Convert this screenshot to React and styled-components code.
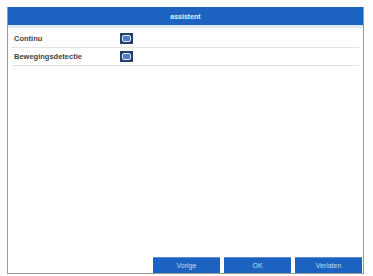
import React from 'react'
import styled, { createGlobalStyle } from 'styled-components'

const GlobalStyle = createGlobalStyle`
	html, body {
		margin: 0;
		padding: 0;
		background: #ffffff;
	}
	body {
		font-family: 'Liberation Sans', Arial, sans-serif;
	}
`

const Page = styled.div`
	width: 373px;
	height: 276px;
	padding: 7px 9px 2px 7px;
	box-sizing: border-box;
	background: #fdfdfd;
`

const Dialog = styled.div`
	height: 100%;
	display: flex;
	flex-direction: column;
	border: 1px solid #9a9a9a;
	border-top: none;
	background: #ffffff;
	box-sizing: border-box;
`

const TitleBar = styled.div`
	height: 18px;
	background: #1c62c0;
	color: #e8eefa;
	font-size: 7px;
	font-weight: bold;
	display: flex;
	align-items: center;
	justify-content: center;
	border-bottom: 3px solid #dde6f3;
`

const Body = styled.div`
	flex: 1;
	display: flex;
	flex-direction: column;
	padding: 2px 4px 0 4px;
`

const Row = styled.div`
	height: 17px;
	display: flex;
	align-items: center;
	border-bottom: 1px solid #e3e3e3;
`

const Label = styled.span`
	width: 106px;
	padding-left: 2px;
	font-size: 7.5px;
	font-weight: bold;
	color: #444444;
`

const Check = styled.span`
	width: 13px;
	height: 11px;
	background: #23406e;
	display: flex;
	align-items: center;
	justify-content: center;
	box-sizing: border-box;
	&::after {
		content: '';
		width: 7px;
		height: 5px;
		border: 1.5px solid #e4e9f2;
		border-radius: 2px;
		background: #4f7cc4;
	}
`

const Footer = styled.div`
	display: flex;
	justify-content: flex-end;
	gap: 4px;
	margin-top: auto;
	padding-right: 1px;
`

const Button = styled.div`
	width: 67px;
	height: 15px;
	background: #1c62c0;
	color: #c9d8f0;
	font-size: 7px;
	display: flex;
	align-items: center;
	justify-content: center;
	border-top: 1px solid #5c8dd4;
`

const rows = ['Continu', 'Bewegingsdetectie']

export default function App() {
	return (
		<>
			<GlobalStyle />
			<Page>
				<Dialog>
					<TitleBar>assistent</TitleBar>
					<Body>
						{rows.map(r => (
							<Row key={r}>
								<Label>{r}</Label>
								<Check />
							</Row>
						))}
					</Body>
					<Footer>
						<Button>Vorige</Button>
						<Button>OK</Button>
						<Button>Verlaten</Button>
					</Footer>
				</Dialog>
			</Page>
		</>
	)
}
